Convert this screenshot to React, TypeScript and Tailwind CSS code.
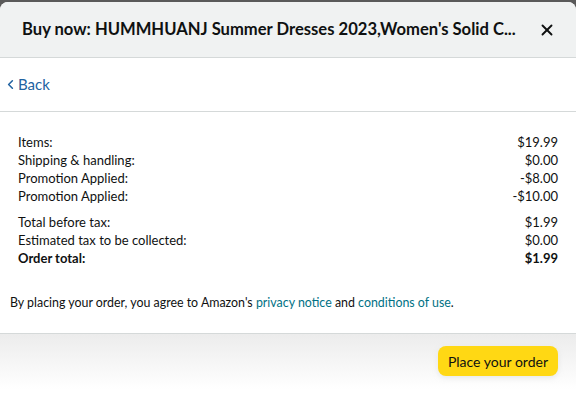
import { X, ChevronLeft } from 'lucide-react'

const rows = [
  { label: 'Items:', value: '$19.99' },
  { label: 'Shipping & handling:', value: '$0.00' },
  { label: 'Promotion Applied:', value: '-$8.00' },
  { label: 'Promotion Applied:', value: '-$10.00' },
]

const totals = [
  { label: 'Total before tax:', value: '$1.99' },
  { label: 'Estimated tax to be collected:', value: '$0.00' },
]

export default function App() {
  return (
    <div className="h-[413px] w-[576px] bg-[#5a5a5a] pt-[2px] font-['Lato','Liberation_Sans',Arial,sans-serif] text-[#0f1111]">
      <div className="flex h-[411px] flex-col overflow-hidden rounded-t-[8px] bg-white">
        <div className="flex h-[56px] shrink-0 items-center justify-between border-b border-[#d5d9d9] bg-[#f0f2f2] pl-[22px] pr-[20px]">
          <h2 className="whitespace-nowrap text-[16.6px] font-bold">
            Buy now: HUMMHUANJ Summer Dresses 2023,Women's Solid C...
          </h2>
          <X className="ml-4 h-[18px] w-[18px] shrink-0" strokeWidth={2.5} />
        </div>

        <div className="flex h-[54px] shrink-0 items-center border-b border-[#d5d9d9] pl-[3px]">
          <a className="flex items-center text-[15px] text-[#2162a1]">
            <ChevronLeft className="h-[15px] w-[15px]" strokeWidth={2.5} />
            Back
          </a>
        </div>

        <div className="px-[18px] pt-[21px] text-[13px] leading-[18px]">
          {rows.map((r, i) => (
            <div key={i} className="flex justify-between">
              <span>{r.label}</span>
              <span>{r.value}</span>
            </div>
          ))}
          <div className="mt-[8px]">
            {totals.map((r, i) => (
              <div key={i} className="flex justify-between">
                <span>{r.label}</span>
                <span>{r.value}</span>
              </div>
            ))}
            <div className="flex justify-between font-bold">
              <span>Order total:</span>
              <span>$1.99</span>
            </div>
          </div>
        </div>

        <p className="px-[10px] pt-[27px] text-[12.4px]">
          By placing your order, you agree to Amazon's{' '}
          <a className="text-[#007185]">privacy notice</a> and{' '}
          <a className="text-[#007185]">conditions of use</a>.
        </p>

        <div className="mt-[20px] flex h-[56px] shrink-0 items-center justify-end border-t border-[#d5d9d9] bg-gradient-to-b from-[#ececec] to-white pr-[18px]">
          <button className="h-[30px] rounded-[8px] bg-[#ffd814] px-[10px] text-[14px] shadow-[0_2px_5px_rgba(213,217,217,0.5)]">
            Place your order
          </button>
        </div>
      </div>
    </div>
  )
}
